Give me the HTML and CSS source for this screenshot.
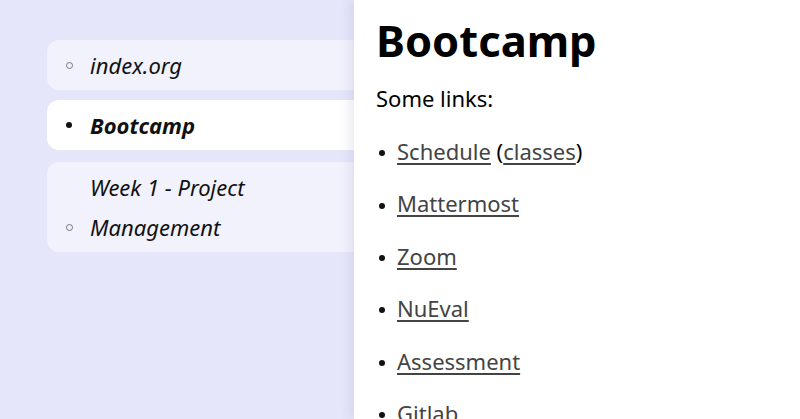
FILE: index.html
```html
<!DOCTYPE html>
<html>
<head>
<meta charset="utf-8">
<link rel="stylesheet" href="styles.css">
</head>
<body>
<div class="page">
  <nav class="sidebar">
    <div class="nav-item">
      <span class="marker circle"></span>
      <span class="nav-text">index.org</span>
    </div>
    <div class="nav-item active">
      <span class="marker disc"></span>
      <span class="nav-text">Bootcamp</span>
    </div>
    <div class="nav-item next">
      <span class="marker circle"></span>
      <span class="nav-text">Week 1 - Project<br>Management</span>
    </div>
  </nav>
  <main class="content">
    <h1 class="title">Bootcamp</h1>
    <p class="intro">Some links:</p>
    <ul class="links">
      <li><a href="#">Schedule</a> (<a href="#">classes</a>)</li>
      <li><a href="#">Mattermost</a></li>
      <li><a href="#">Zoom</a></li>
      <li><a href="#">NuEval</a></li>
      <li><a href="#">Assessment</a></li>
      <li><a href="#">Gitlab</a></li>
    </ul>
  </main>
</div>
</body>
</html>
```
FILE: styles.css
```css
html, body {
  margin: 0;
  padding: 0;
  height: 100%;
  overflow: hidden;
}
body {
  font-family: "Noto Sans", "Open Sans", sans-serif;
  background: #e6e6fa;
  color: #000;
}
.page {
  display: flex;
  height: 419px;
}
.sidebar {
  width: 307px;
  flex: none;
  padding: 40px 0 0 47px;
  display: flex;
  flex-direction: column;
  gap: 10px;
}
.nav-item {
  display: flex;
  align-items: flex-end;
  background: #f2f2fd;
  border-radius: 12px 0 0 12px;
  padding: 5px 0 5px 19px;
  font-size: 22px;
  line-height: 40px;
  font-style: italic;
}
.nav-item.next {
  margin-top: 2px;
}
.nav-item.active {
  background: #fff;
  font-weight: 700;
}
.marker {
  width: 24px;
  height: 40px;
  flex: none;
  display: flex;
  align-items: center;
}
.marker::before {
  content: "";
  display: block;
  box-sizing: border-box;
  width: 7px;
  height: 7px;
  border-radius: 50%;
}
.circle::before {
  border: 1.2px solid #777;
}
.disc::before {
  width: 6px;
  height: 6px;
  background: #111;
}
.nav-text {
  color: #111;
}
.content {
  flex: 1;
  background: #fff;
  padding: 0 22px;
  box-shadow: -4px 0 10px rgba(80, 80, 140, 0.12);
}
.title {
  margin: 12px 0 0;
  font-size: 43.5px;
  font-weight: 700;
  line-height: 56px;
}
.intro {
  margin: 14px 0 0;
  font-size: 22px;
  line-height: 32px;
}
.links {
  margin: 21px 0 0;
  padding: 0;
  list-style: none;
  font-size: 22px;
  line-height: 32px;
}
.links li {
  margin-bottom: 20.4px;
}
.links li::before {
  content: "";
  display: inline-block;
  width: 6px;
  height: 6px;
  border-radius: 50%;
  background: #111;
  vertical-align: middle;
  margin: 0 12px 2px 3px;
}
.links a {
  color: #444;
  text-decoration: underline;
  text-underline-offset: 3px;
}
```
